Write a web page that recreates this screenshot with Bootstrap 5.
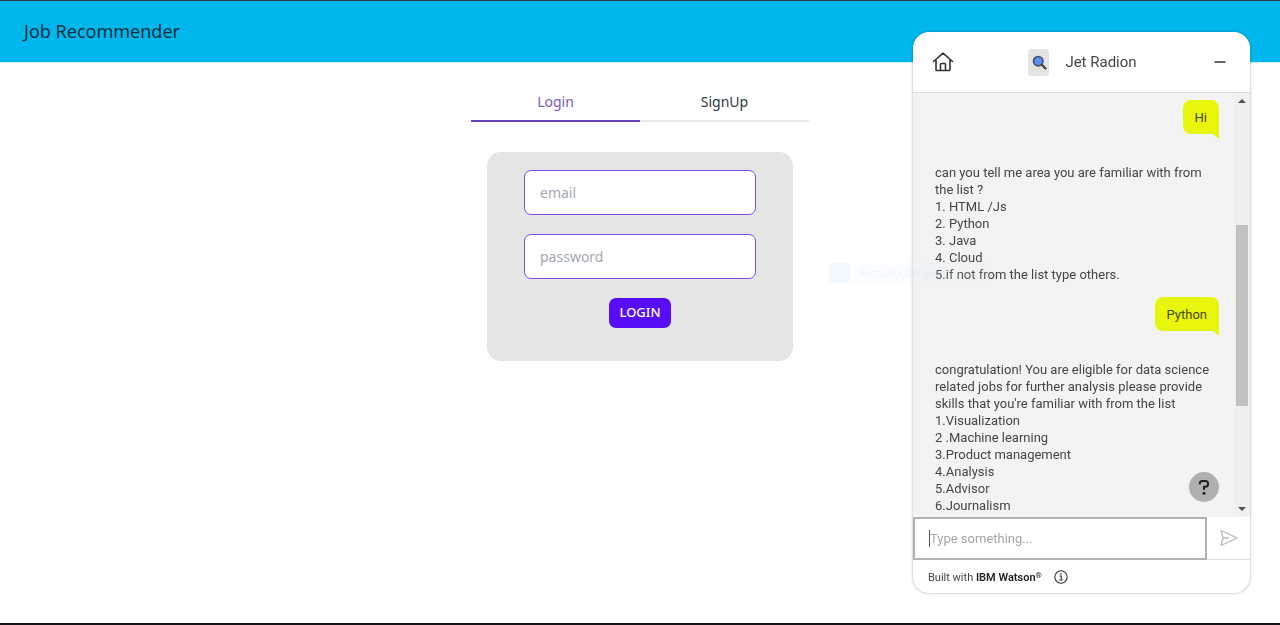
<!DOCTYPE html>
<html lang="en">
<head>
<meta charset="utf-8">
<meta name="viewport" content="width=device-width, initial-scale=1">
<title>Job Recommender</title>
<link href="https://cdn.jsdelivr.net/npm/bootstrap@5.3.0/dist/css/bootstrap.min.css" rel="stylesheet">
<style>
  body { font-family: "Noto Sans", sans-serif; font-size: 14px; min-height: 100vh; border-top: 1px solid #2b3a42; border-bottom: 2px solid #16171a; }
  .site-bar { background: #00b7ed; height: 61px; padding: 0 24px; box-shadow: 0 1px 1px #d5f1fa; }
  .site-bar a { font-size: 18px; color: #13303f; }
  .auth-box { width: 100%; max-width: 338px; padding-top: 20px; }
  .auth-tabs .nav-link { height: 40px; padding: 0; background: none; border: 0; border-bottom: 2px solid #e4e7eb; border-radius: 0; color: #2d3740; }
  .auth-tabs .nav-link.active { background: none; color: #7a5cc0; border-color: #6741bd; }
  .auth-card { background: #e4e6e5; border-radius: 14px; margin: 30px 16px 0; padding: 18px 37px 33px; gap: 19px; }
  .auth-card .form-control { height: 45px; padding: 0 15px; font-size: 14px; border: 1px solid #7d4fe0; border-radius: 7px; }
  .auth-card .form-control::placeholder { color: #a3a8b3; }
  .btn-login { height: 30px; padding: 0 10px; font-size: 13px; font-weight: 500; background: #570df8; color: #fff; border: 0; border-radius: 7px; }
  .btn-login:hover { background: #4506cb; color: #fff; }

  .chat { position: fixed; top: 32px; right: 30px; bottom: 32px; width: 337px; border-radius: 16px; background: #fff; color: #454545; box-shadow: 0 0 3px rgba(0,0,0,.35); overflow: hidden; font-family: Roboto, sans-serif; font-size: 13px; line-height: 17px; }
  .chat-head { height: 61px; padding: 0 20px 0 18px; border-bottom: 1px solid #dcdcdc; }
  .chat-head button, .send { border: 0; background: none; padding: 0; line-height: 0; }
  .avatar { width: 21px; height: 27px; border-radius: 4px; background: #e3e3e3; }
  .bot-name { font-size: 15px; }
  .chat-log { background: #f3f3f3; min-height: 0; }
  .messages { padding: 7px 15px 0 22px; }
  .bubble { position: relative; align-self: flex-end; background: #e8f60e; color: #45480f; border-radius: 8px 8px 0 8px; padding: 9px 12px 8px; margin-bottom: 30px; }
  .bubble::after { content: ""; position: absolute; right: 0; top: 100%; border-top: 5px solid #e8f60e; border-left: 6px solid transparent; }
  .reply { margin: 0 -15px 14px 0; }
  .scroll-rail { width: 16px; background: #f0f0f0; padding: 6px 0; }
  .scroll-thumb { width: 12px; height: 44%; background: #c1c1c1; margin-bottom: 101px; }
  .help { position: absolute; right: 31px; bottom: 91px; width: 30px; height: 30px; padding: 0; border: 0; border-radius: 50%; background: #b0b0b0; line-height: 0; }
  .compose { height: 43px; border-bottom: 1px solid #e0e0e0; }
  .compose input { border: 2px solid #b1b1b1; border-radius: 0; height: 43px; padding: 0 15px; font-size: 13px; box-shadow: none; }
  .compose input::placeholder { color: #a5a5a5; }
  .compose-field { position: relative; width: 294px; }
  .caret { position: absolute; left: 16px; top: 13px; width: 1px; height: 17px; background: #555; }
  .send { flex: 1; }
  .chat-foot { height: 33px; padding: 1px 15px 0; font-size: 11px; gap: 12px; }
  .chat-foot b { font-weight: 600; color: #222; }
  .chat-foot sup { font-size: 8px; top: -3px; }
  .fading-tip { position: fixed; left: 829px; top: 263px; width: 160px; height: 20px; background: rgba(220,238,252,.12); color: rgba(90,110,130,.06); font: 11px/20px "Noto Sans", sans-serif; gap: 9px; pointer-events: none; }
  .fading-tip i { width: 20px; height: 20px; background: rgba(190,225,250,.15); }
</style>
</head>
<body class="bg-white">
<header class="site-bar d-flex align-items-center"><a href="#" class="text-decoration-none">Job Recommender</a></header>

<main class="auth-box mx-auto">
  <div class="nav auth-tabs nav-fill nav-justified" role="tablist">
    <button class="nav-link active" role="tab" aria-selected="true">Login</button>
    <button class="nav-link" role="tab" aria-selected="false">SignUp</button>
  </div>
  <form class="auth-card d-flex flex-column">
    <input type="email" class="form-control" placeholder="email" aria-label="email">
    <input type="password" class="form-control" placeholder="password" aria-label="password">
    <button type="submit" class="btn btn-login align-self-center">LOGIN</button>
  </form>
</main>

<section class="chat d-flex flex-column" aria-label="Chat">
  <div class="chat-head d-flex align-items-center justify-content-between flex-shrink-0">
    <button type="button" aria-label="Home"><svg width="24" height="24" viewBox="0 0 24 24" fill="none" stroke="#333" stroke-width="1.6" stroke-linejoin="round" stroke-linecap="round"><path d="M2.500 11.500 12 3.200 21.500 11.500M5 10v9.700Q5 20.500 5.800 20.500H18.200Q19 20.500 19 19.700V10M9.500 20.500v-6.300Q9.500 13.500 10.200 13.500h3.600Q14.500 13.500 14.500 14.200v6.300"/></svg></button>
    <div class="d-flex align-items-center gap-3">
      <span class="avatar d-flex align-items-center justify-content-center"><svg width="16" height="16" viewBox="0 0 16 16"><circle cx="7.200" cy="7.200" r="4.700" fill="#5b8ff5" stroke="#45526a" stroke-width="1.700"/><path d="m10.800 10.800 3.700 3.700" stroke="#3c3f46" stroke-width="2.200" stroke-linecap="round"/></svg></span>
      <span class="bot-name">Jet Radion</span>
    </div>
    <button type="button" aria-label="Minimize"><svg width="20" height="20" viewBox="0 0 20 20"><path d="M4.500 10h11" stroke="#333" stroke-width="1.700"/></svg></button>
  </div>

  <div class="chat-log d-flex flex-fill overflow-hidden">
    <div class="messages d-flex flex-column flex-fill">
      <div class="bubble">Hi</div>
      <div class="reply">can you tell me area you are familiar with from<br>the list ?<br>1. HTML /Js<br>2. Python<br>3. Java<br>4. Cloud<br>5.if not from the list type others.</div>
      <div class="bubble">Python</div>
      <div class="reply">congratulation! You are eligible for data science<br>related jobs for further analysis please provide<br>skills that you're familiar with from the list<br>1.Visualization<br>2 .Machine learning<br>3.Product management<br>4.Analysis<br>5.Advisor<br>6.Journalism</div>
    </div>
    <div class="scroll-rail d-flex flex-column align-items-center flex-shrink-0" aria-hidden="true">
      <svg width="8" height="4" viewBox="0 0 8 4"><path d="M0 4 4 0l4 4z" fill="#505050"/></svg>
      <span class="scroll-thumb mt-auto"></span>
      <svg width="8" height="4" viewBox="0 0 8 4"><path d="M0 0h8L4 4z" fill="#505050"/></svg>
    </div>
  </div>
  <button type="button" class="help" aria-label="Help"><svg width="30" height="30" viewBox="0 0 30 30"><path d="M10.800 12.300v-.8Q10.800 9 13.300 9h3.200Q19 9 19 11.500v.8Q19 14.700 16.500 14.700H15v3" fill="none" stroke="#222" stroke-width="2"/><circle cx="15" cy="21.300" r="1.500" fill="#222"/></svg></button>

  <form class="compose d-flex flex-shrink-0">
    <div class="compose-field">
      <input type="text" class="form-control" placeholder="Type something..." aria-label="Type something...">
      <span class="caret"></span>
    </div>
    <button type="submit" class="send" aria-label="Send"><svg width="20" height="20" viewBox="0 0 20 20" fill="none" stroke="#bababa" stroke-width="1.300" stroke-linejoin="round"><path d="m2 2.500 16 7.500-16 7.500 2.200-7.500zM4.200 10H10"/></svg></button>
  </form>
  <div class="chat-foot d-flex align-items-center flex-shrink-0">
    <span>Built with <b>IBM Watson<sup>®</sup></b></span>
    <svg width="14" height="14" viewBox="0 0 14 14" fill="none" stroke="#333"><circle cx="7" cy="7" r="6.200" stroke-width="1.100"/><path d="M5.500 6h1.700v4M5.300 10h3.500" stroke-width="1.100"/><circle cx="6.900" cy="3.900" r=".8" fill="#333" stroke="none"/></svg>
  </div>
</section>
<div class="fading-tip d-flex" aria-hidden="true"><i></i><span>Rectangular Snip</span></div>
<script src="https://cdn.jsdelivr.net/npm/bootstrap@5.3.0/dist/js/bootstrap.bundle.min.js"></script>
</body>
</html>
